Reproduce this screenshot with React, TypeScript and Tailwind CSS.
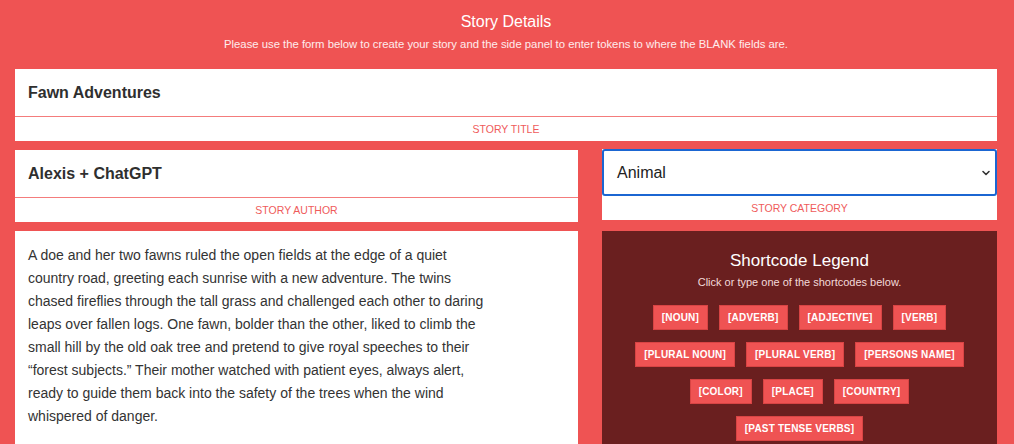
const shortcodes = [
  ["[NOUN]", "[ADVERB]", "[ADJECTIVE]", "[VERB]"],
  ["[PLURAL NOUN]", "[PLURAL VERB]", "[PERSONS NAME]"],
  ["[COLOR]", "[PLACE]", "[COUNTRY]"],
  ["[PAST TENSE VERBS]"],
];

function FieldLabel({ children }: { children: React.ReactNode }) {
  return (
    <div className="flex h-[25px] items-center justify-center border-t border-[#f47c7c] bg-white pt-[1px] text-[10.5px] uppercase text-[#ef5b5b]">
      {children}
    </div>
  );
}

export default function App() {
  return (
    <div
      className="min-h-[444px] bg-[#ef5353] pt-[12px] pr-[17px] pl-[15px] text-[#333]"
      style={{ fontFamily: '"Liberation Sans", Arial, sans-serif' }}
    >
      {/* Header */}
      <div className="text-center text-white">
        <h1 className="text-[16px] leading-[19px]">Story Details</h1>
        <p className="mt-[6px] text-[11.3px] leading-[14px] text-white/90">
          Please use the form below to create your story and the side panel to enter tokens to where the BLANK fields are.
        </p>
      </div>

      {/* Title */}
      <div className="mt-[18px] bg-white">
        <div className="flex h-[47px] items-center px-[13px] text-[16px] font-bold text-[#2f2f2f]">
          Fawn Adventures
        </div>
        <FieldLabel>Story Title</FieldLabel>
      </div>

      <div className="mt-[9px] grid grid-cols-[563px_1fr] gap-x-[24px]">
        {/* Left column */}
        <div className="flex flex-col gap-[9px]">
          <div className="bg-white">
            <div className="flex h-[47px] items-center px-[13px] text-[16px] font-bold text-[#2f2f2f]">
              Alexis + ChatGPT
            </div>
            <FieldLabel>Story Author</FieldLabel>
          </div>
          <div className="bg-white px-[13px] pt-[13px] pb-[20px]">
            <p className="max-w-[467px] text-[14px] leading-[23px] text-[#333]">
              A doe and her two fawns ruled the open fields at the edge of a quiet country road, greeting each sunrise with a new adventure. The twins chased fireflies through the tall grass and challenged each other to daring leaps over fallen logs. One fawn, bolder than the other, liked to climb the small hill by the old oak tree and pretend to give royal speeches to their “forest subjects.” Their mother watched with patient eyes, always alert, ready to guide them back into the safety of the trees when the wind whispered of danger.
            </p>
          </div>
        </div>

        {/* Right column */}
        <div className="-mt-[1px] flex flex-col gap-[11px]">
          <div className="bg-white">
            <div className="flex h-[47px] items-center justify-between rounded-[3px] border-2 border-[#1b66d2] pr-[4px] pl-[13px] text-[16px] text-[#222]">
              <span>Animal</span>
              <svg width="10" height="10" viewBox="0 0 10 10" fill="none">
                <path d="M2 3.5 L5 6.5 L8 3.5" stroke="#333" strokeWidth="1.6" strokeLinecap="round" strokeLinejoin="round" />
              </svg>
            </div>
            <div className="flex h-[24px] items-center justify-center bg-white pt-[1px] text-[10.5px] uppercase text-[#ef5b5b]">
              Story Category
            </div>
          </div>
          <div className="flex flex-col items-center bg-[#6a1f1f] pt-[20px] pb-[20px]">
            <h2 className="text-[17px] leading-[20px] text-white">Shortcode Legend</h2>
            <p className="mt-[4px] text-[11px] leading-[14px] text-[#f3dada]">
              Click or type one of the shortcodes below.
            </p>
            <div className="mt-[16px] flex flex-col items-center gap-[12px]">
              {shortcodes.map((row, i) => (
                <div key={i} className="flex gap-[11px]">
                  {row.map((code) => (
                    <span
                      key={code}
                      className="flex h-[25px] items-center border border-[#d84444] bg-[#ef5353] px-[8px] text-[10px] font-bold tracking-[0.2px] text-white"
                    >
                      {code}
                    </span>
                  ))}
                </div>
              ))}
            </div>
          </div>
        </div>
      </div>
    </div>
  );
}
